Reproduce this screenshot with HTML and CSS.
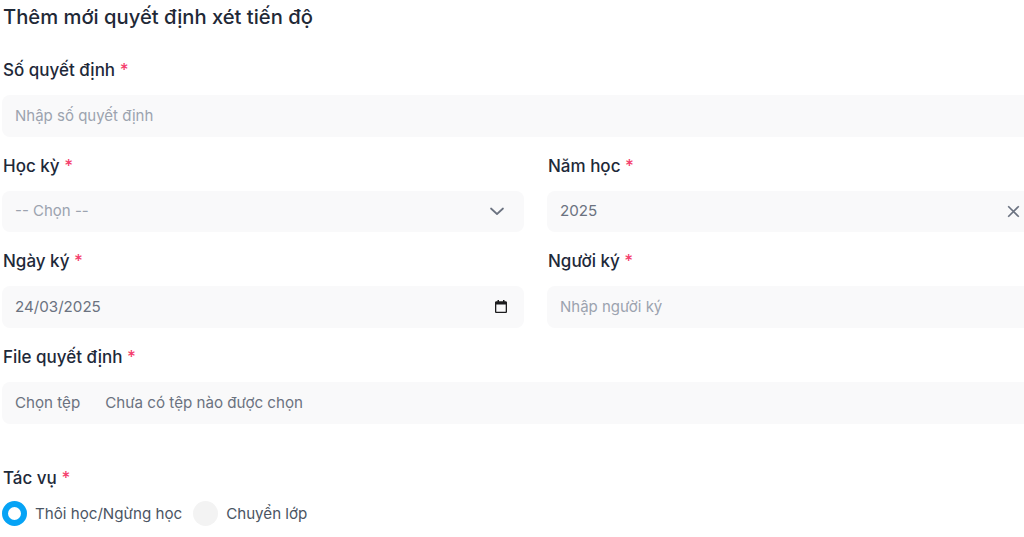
FILE: index.html
```html
<!DOCTYPE html>
<html lang="vi">
<head>
<meta charset="utf-8">
<title>Thêm mới quyết định xét tiến độ</title>
<link rel="stylesheet" href="styles.css">
</head>
<body>
<form class="form">
  <h1 class="title">Thêm mới quyết định xét tiến độ</h1>
  <div class="group">
    <label class="label">Số quyết định <span class="req">*</span></label>
    <div class="control"><span class="placeholder">Nhập số quyết định</span></div>
  </div>
  <div class="grid">
    <div class="group">
      <label class="label">Học kỳ <span class="req">*</span></label>
      <div class="control"><span class="placeholder">-- Chọn --</span>
        <svg class="chev" width="16" height="16" viewBox="0 0 16 16" fill="none"><path d="M2 5.500 8 11l6-5.500" stroke="#6b7280" stroke-width="1.700" stroke-linecap="round" stroke-linejoin="round"/></svg>
      </div>
    </div>
    <div class="group">
      <label class="label">Năm học <span class="req">*</span></label>
      <div class="control"><span class="value">2025</span>
        <svg class="clear" width="13" height="13" viewBox="0 0 13 13" fill="none"><path d="M1.200 1.200l10.600 10.600M11.800 1.200 1.200 11.800" stroke="#6b7280" stroke-width="1.600"/></svg>
      </div>
    </div>
    <div class="group">
      <label class="label">Ngày ký <span class="req">*</span></label>
      <div class="control"><span class="value">24/03/2025</span>
        <svg class="cal" width="12" height="13" viewBox="0 0 12 13"><path fill="#1c1c1e" d="M2.500 0H4v1.300h4V0h1.500v1.300h1.200c.7 0 1.300.6 1.300 1.300v9.100c0 .7-.6 1.300-1.300 1.300H1.300C.6 13 0 12.400 0 11.700V2.600c0-.7.6-1.300 1.300-1.300h1.200V0zM1.300 4.500v7.200h9.400V4.500H1.300z"/></svg>
      </div>
    </div>
    <div class="group">
      <label class="label">Người ký <span class="req">*</span></label>
      <div class="control"><span class="placeholder">Nhập người ký</span></div>
    </div>
  </div>
  <div class="group">
    <label class="label">File quyết định <span class="req">*</span></label>
    <div class="control file"><span class="value">Chọn tệp</span><span class="value">Chưa có tệp nào được chọn</span></div>
  </div>
  <div class="group task">
    <label class="label">Tác vụ <span class="req">*</span></label>
    <div class="radios">
      <span class="radio on"></span><span class="radio-text first">Thôi học/Ngừng học</span>
      <span class="radio"></span><span class="radio-text">Chuyển lớp</span>
    </div>
  </div>
</form>
</body>
</html>
```
FILE: styles.css
```css
* { box-sizing: border-box; }
html, body { margin: 0; height: 537px; overflow: hidden; background: #fff; }
body { font-family: Inter, "Noto Sans", sans-serif; color: #1e2939; }
.form { width: 1067px; margin-left: 2px; padding-top: 3px; display: flex; flex-direction: column; row-gap: 16px; }
.title { margin: 0 0 11px 1px; font-size: 20.200px; line-height: 27px; font-weight: 500; color: #1f2937; }
.group { display: flex; flex-direction: column; }
.label { display: block; padding: 1px 0 0 1px; font-size: 17px; line-height: 24px; font-weight: 500; margin-bottom: 13px; color: #1e2939; }
.req { color: #f43f6e; }
.grid { display: grid; grid-template-columns: 522px 522px; column-gap: 23px; row-gap: 16px; }
.control { height: 41.600px; display: flex; align-items: center; justify-content: space-between; background: #f9f9fa; border-radius: 8px; padding: 0 13px; font-size: 15px; line-height: 20px; }
.placeholder { color: #9ca3af; }
.value { color: #6b7280; font-size: 15.150px; }
.chev { margin-right: 6px; }
.clear { margin-right: 36px; }
.cal { margin-right: 4px; }
.file { justify-content: flex-start; gap: 25px; height: 42px; }
.task { margin-top: 25px; }
.task .label { margin-bottom: 11px; }
.radios { display: flex; align-items: center; font-size: 15.150px; line-height: 25px; color: #4b5563; }
.radio { width: 25px; height: 25px; border-radius: 50%; background: #f3f3f3; flex: none; }
.radio.on { background: #fff; border: 6px solid #06a3f5; }
.radio-text { margin-left: 8px; }
.first { margin-right: 11px; }
```
